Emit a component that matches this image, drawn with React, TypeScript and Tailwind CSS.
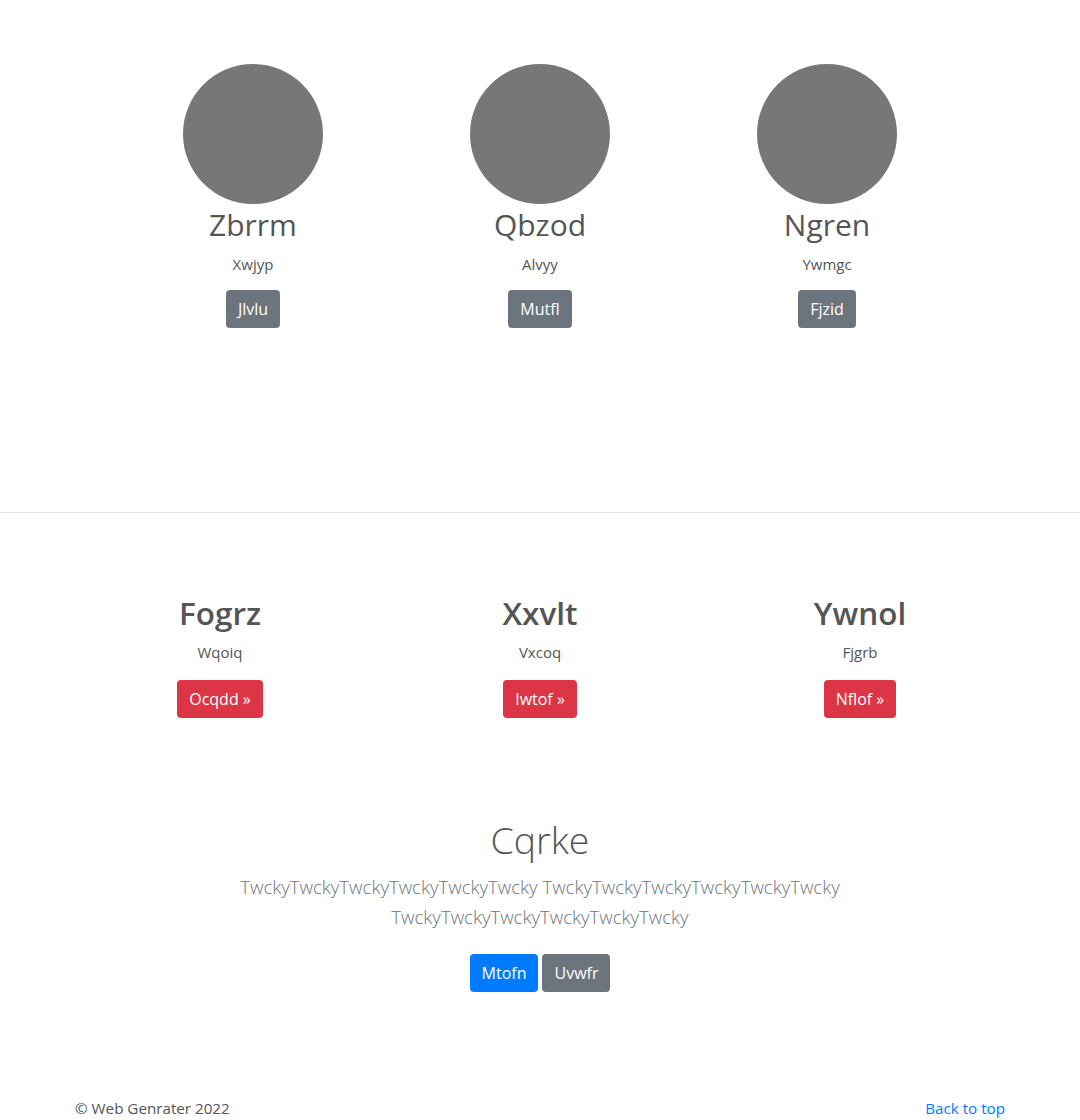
export default function App() {
  const team = [
    { name: "Zbrrm", role: "Xwjyp", btn: "Jlvlu" },
    { name: "Qbzod", role: "Alvyy", btn: "Mutfl" },
    { name: "Ngren", role: "Ywmgc", btn: "Fjzid" },
  ];
  const features = [
    { title: "Fogrz", sub: "Wqoiq", btn: "Ocqdd" },
    { title: "Xxvlt", sub: "Vxcoq", btn: "Iwtof" },
    { title: "Ywnol", sub: "Fjgrb", btn: "Nflof" },
  ];

  return (
    <div className="min-h-screen bg-white text-[#555] font-['Open_Sans','Noto_Sans',sans-serif]">
      {/* Team */}
      <section className="h-[513px] border-b border-[#e5e5e5] pt-[64px]">
        <div className="mx-auto grid w-[861px] grid-cols-3">
          {team.map((t) => (
            <div key={t.name} className="flex flex-col items-center text-center">
              <div className="h-[140px] w-[140px] rounded-full bg-[#777]" />
              <h2 className="mb-2 pt-[2px] text-[30px] leading-[38px] font-normal">{t.name}</h2>
              <p className="mb-[14px] text-[15px] leading-6">{t.role}</p>
              <button className="h-[38px] rounded bg-[#6c757d] px-3 text-[16px] text-white">
                {t.btn}
              </button>
            </div>
          ))}
        </div>
      </section>

      {/* Features */}
      <section className="pt-[81px]">
        <div className="mx-auto grid w-[960px] grid-cols-3">
          {features.map((f) => (
            <div key={f.title} className="flex flex-col items-center text-center">
              <h2 className="mb-2 text-[31.5px] leading-[38px] font-semibold">{f.title}</h2>
              <p className="mb-[16px] text-[15px] leading-6">{f.sub}</p>
              <button className="h-[38px] rounded bg-[#dc3545] px-3 text-[16px] text-white">
                {f.btn} &raquo;
              </button>
            </div>
          ))}
        </div>
      </section>

      {/* Hero */}
      <section className="mt-[98px] flex flex-col items-center text-center">
        <h1 className="mb-2 text-[37.5px] leading-[48px] font-light">Cqrke</h1>
        <p className="mb-[22px] text-[18.6px] leading-[30px] font-light text-[#6c757d]">
          TwckyTwckyTwckyTwckyTwckyTwcky TwckyTwckyTwckyTwckyTwckyTwcky
          <br />
          TwckyTwckyTwckyTwckyTwckyTwcky
        </p>
        <div className="flex gap-1">
          <button className="h-[38px] rounded bg-[#007bff] px-3 text-[16px] text-white">Mtofn</button>
          <button className="h-[38px] rounded bg-[#6c757d] px-3 text-[16px] text-white">Uvwfr</button>
        </div>
      </section>

      {/* Footer */}
      <footer className="mx-auto mt-[104px] flex w-[960px] justify-between px-[15px] text-[15.2px] leading-6">
        <p>&copy; Web Genrater 2022</p>
        <a href="#" className="text-[#007bff]">Back to top</a>
      </footer>
    </div>
  );
}
